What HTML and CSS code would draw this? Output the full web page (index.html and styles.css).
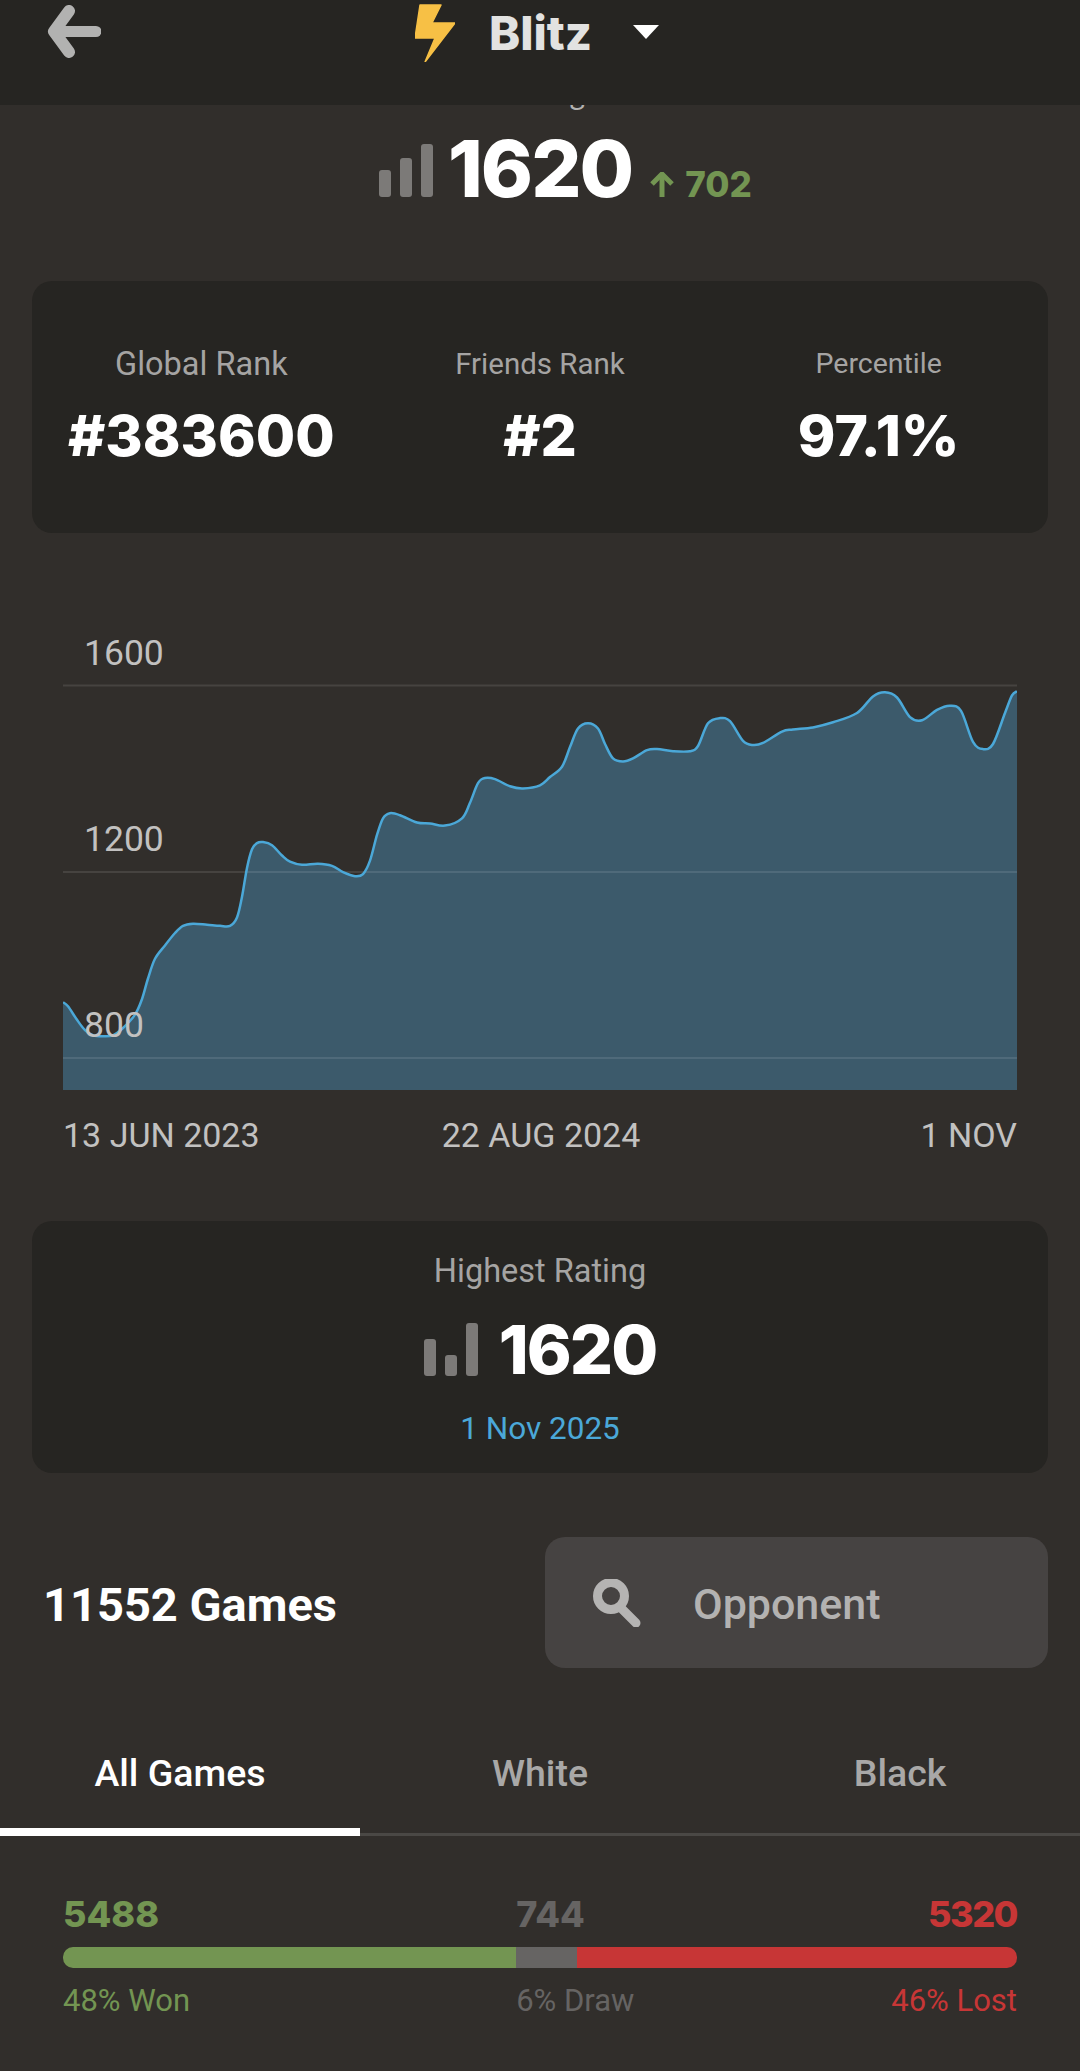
FILE: index.html
```html
<!DOCTYPE html>
<html lang="en">
<head>
  <meta charset="UTF-8">
  <meta name="viewport" content="width=device-width, initial-scale=1.0">
  <title>Blitz Stats</title>
  <link rel="stylesheet" href="styles.css">
</head>
<body>
  <header class="topbar">
    <svg class="back-icon" viewBox="0 0 54 53" aria-hidden="true">
      <polyline points="22,6 7,26.5 22,47"></polyline>
      <line x1="8" y1="26.5" x2="49" y2="26.5"></line>
    </svg>
    <svg class="bolt-icon" viewBox="0 0 40 58" aria-hidden="true">
      <polygon points="5,1 26,1 17,19 40,19 10,58 20,34 0,34"></polygon>
    </svg>
    <span class="topbar-title">Blitz</span>
    <span class="caret"></span>
  </header>

  <main>
    <div class="rating-label">Rating</div>
    <div class="rating-row">
      <div class="bars">
        <span class="bar-low"></span>
        <span class="bar-mid"></span>
        <span class="bar-high"></span>
      </div>
      <span class="rating-value">1620</span>
      <svg class="up-icon" viewBox="0 0 24 25" aria-hidden="true">
        <polyline points="2,12 12,2 22,12"></polyline>
        <line x1="12" y1="3" x2="12" y2="25"></line>
      </svg>
      <span class="rating-gain">702</span>
    </div>

    <section class="card rank-card">
      <div class="rank-col">
        <div class="rank-label rank-label-global">Global Rank</div>
        <div class="rank-value">#383600</div>
      </div>
      <div class="rank-col">
        <div class="rank-label rank-label-friends">Friends Rank</div>
        <div class="rank-value">#2</div>
      </div>
      <div class="rank-col">
        <div class="rank-label">Percentile</div>
        <div class="rank-value">97.1%</div>
      </div>
    </section>

    <svg class="chart" viewBox="0 0 954 540" aria-label="Rating history">
      <path id="chart-area" class="chart-area"></path>
      <line class="chart-grid" x1="0" y1="65.5" x2="954" y2="65.5"></line>
      <line class="chart-grid" x1="0" y1="252" x2="954" y2="252"></line>
      <line class="chart-grid" x1="0" y1="438" x2="954" y2="438"></line>
      <path id="chart-line" class="chart-line"></path>
      <text class="chart-text" x="21" y="45">1600</text>
      <text class="chart-text" x="21" y="231">1200</text>
      <text class="chart-text" x="21" y="417">800</text>
      <text class="chart-date" x="0" y="527">13 JUN 2023</text>
      <text class="chart-date" x="478" y="527" text-anchor="middle">22 AUG 2024</text>
      <text class="chart-date" x="954" y="527" text-anchor="end">1 NOV</text>
    </svg>

    <section class="card highest-card">
      <div class="rank-label highest-label">Highest Rating</div>
      <div class="highest-row">
        <div class="bars">
          <span class="bar-mid2"></span>
          <span class="bar-short"></span>
          <span class="bar-high"></span>
        </div>
        <span class="highest-value">1620</span>
      </div>
      <div class="highest-date">1 Nov 2025</div>
    </section>

    <div class="games-row">
      <div class="games-count">11552 Games</div>
      <div class="opponent-box">
        <svg class="search-icon" viewBox="0 0 48 48" aria-hidden="true">
          <circle cx="18" cy="17" r="13.5"></circle>
          <line x1="28" y1="29" x2="43" y2="44"></line>
        </svg>
        <span class="opponent-text">Opponent</span>
      </div>
    </div>

    <nav class="tabs">
      <div class="tab tab-active">All Games</div>
      <div class="tab">White</div>
      <div class="tab">Black</div>
    </nav>

    <section class="results">
      <div class="results-row results-counts">
        <span class="won">5488</span>
        <span class="draw">744</span>
        <span class="lost">5320</span>
      </div>
      <div class="result-bar">
        <span class="seg-won" style="width: 47.5%"></span>
        <span class="seg-draw" style="width: 6.4%"></span>
        <span class="seg-lost" style="width: 46.1%"></span>
      </div>
      <div class="results-row results-percents">
        <span class="won">48% Won</span>
        <span class="draw">6% Draw</span>
        <span class="lost">46% Lost</span>
      </div>
    </section>
  </main>

  <script src="chart.js"></script>
</body>
</html>
```

FILE: styles.css
```css
body {
  margin: 0;
  padding: 0;
  width: 1080px;
  height: 2071px;
  overflow: hidden;
  background-color: #312e2b;
  font-family: Roboto, sans-serif;
  color: #fff;
}

.topbar {
  position: relative;
  z-index: 2;
  display: flex;
  align-items: flex-start;
  box-sizing: border-box;
  height: 105px;
  padding: 5px 0 0 47px;
  background-color: #262522;
}

.back-icon {
  width: 54px;
  height: 53px;
  margin-right: 314px;
}

.back-icon polyline,
.back-icon line {
  fill: none;
  stroke: #b2b2b1;
  stroke-linecap: round;
  stroke-linejoin: round;
}

.back-icon polyline {
  stroke-width: 12;
}

.back-icon line {
  stroke-width: 11;
}

.bolt-icon {
  width: 40px;
  height: 58px;
  margin-top: -1px;
  fill: #f7c045;
  stroke: #f7c045;
  stroke-width: 1.5;
  stroke-linejoin: round;
}

.topbar-title {
  margin-left: 34px;
  font-family: Inter, sans-serif;
  font-size: 47px;
  font-weight: 800;
  line-height: 56px;
  color: #e2e2e1;
}

.caret {
  width: 0;
  height: 0;
  margin: 20px 0 0 41px;
  border-left: 13px solid transparent;
  border-right: 13px solid transparent;
  border-top: 14px solid #fff;
}

.rating-label {
  height: 30px;
  margin-top: -27px;
  padding-left: 6px;
  font-family: Lato, sans-serif;
  font-size: 30px;
  line-height: 30px;
  text-align: center;
  color: #b2b2b1;
}

.rating-row {
  display: flex;
  align-items: flex-end;
  height: 57px;
  margin-top: 32px;
  padding-left: 379px;
}

.bars {
  display: flex;
  align-items: flex-end;
  gap: 9px;
}

.bars span {
  display: block;
  width: 12px;
  border-radius: 3px;
  background-color: #7c7a78;
}

.bar-low { height: 27px; }
.bar-mid { height: 39px; }
.bar-high { height: 53px; }
.bar-mid2 { height: 37px; }
.bar-short { height: 21px; }

.rating-value {
  margin-left: 15px;
  font-family: Inter, sans-serif;
  font-size: 79px;
  font-weight: 800;
  letter-spacing: -2px;
  line-height: 57px;
}

.up-icon {
  width: 24px;
  height: 25px;
  margin-left: 18px;
  fill: none;
  stroke: #739552;
  stroke-width: 5;
}

.rating-gain {
  margin-left: 11px;
  font-family: Inter, sans-serif;
  font-size: 35px;
  font-weight: 800;
  line-height: 25px;
  color: #739552;
}

.card {
  box-sizing: border-box;
  width: 1016px;
  height: 252px;
  margin-left: 32px;
  border-radius: 20px;
  background-color: #262522;
}

.rank-card {
  display: grid;
  grid-template-columns: repeat(3, 1fr);
  margin-top: 84px;
  padding-top: 66px;
  text-align: center;
}

.rank-label {
  font-size: 28.5px;
  line-height: 34px;
  color: #a5a4a3;
}

.rank-label-global {
  font-size: 32.5px;
}

.rank-label-friends {
  font-size: 29.5px;
}

.rank-value {
  margin-top: 25px;
  font-family: Inter, sans-serif;
  font-size: 57px;
  font-weight: 800;
  line-height: 60px;
}

.chart {
  display: block;
  width: 954px;
  height: 540px;
  margin: 87px 0 0 63px;
}

.chart-area {
  fill: #3c5a6b;
}

.chart-grid {
  stroke: rgba(255, 255, 255, 0.1);
  stroke-width: 2;
}

.chart-line {
  fill: none;
  stroke: #4ba8d8;
  stroke-width: 2.5;
}

.chart-text {
  font-family: Roboto, sans-serif;
  font-size: 35.5px;
  fill: #c2c1c0;
}

.chart-date {
  font-family: Roboto, sans-serif;
  font-size: 34px;
  fill: #c2c1c0;
}

.highest-card {
  margin-top: 61px;
  padding-top: 33px;
  text-align: center;
}

.highest-label {
  font-size: 32.5px;
}

.highest-row {
  display: flex;
  justify-content: center;
  align-items: flex-end;
  height: 53px;
  margin-top: 35px;
}

.highest-value {
  margin-left: 21px;
  font-family: Inter, sans-serif;
  font-size: 68px;
  font-weight: 800;
  letter-spacing: -2px;
  line-height: 53px;
}

.highest-date {
  margin-top: 36px;
  font-size: 31.5px;
  line-height: 34px;
  color: #4ba8d8;
}

.games-row {
  display: flex;
  justify-content: space-between;
  align-items: center;
  margin: 64px 32px 0 43px;
}

.games-count {
  padding-top: 4px;
  font-size: 47px;
  font-weight: 700;
}

.opponent-box {
  display: flex;
  align-items: center;
  box-sizing: border-box;
  width: 503px;
  height: 131px;
  padding-left: 48px;
  border-radius: 20px;
  background-color: #464342;
}

.search-icon {
  width: 48px;
  height: 48px;
  fill: none;
  stroke: #b5b4b3;
  stroke-width: 9;
  stroke-linecap: round;
}

.opponent-text {
  margin-left: 52px;
  padding-top: 2px;
  font-size: 43px;
  font-weight: 500;
  color: #b3b2b1;
}

.tabs {
  display: flex;
  margin-top: 76px;
  border-bottom: 3px solid #4a4845;
}

.tab {
  flex: 1;
  box-sizing: border-box;
  height: 92px;
  margin-bottom: -3px;
  font-size: 37.5px;
  font-weight: 500;
  line-height: 58px;
  text-align: center;
  color: #a9a8a7;
}

.tab-active {
  border-bottom: 8px solid #fff;
  color: #fff;
}

.results {
  margin: 60px 63px 0;
}

.results-row {
  display: grid;
  grid-template-columns: 47.5% 1fr auto;
}

.results-counts {
  font-family: Inter, sans-serif;
  font-size: 36px;
  font-weight: 800;
  line-height: 36px;
}

.results-counts .lost {
  letter-spacing: -1.5px;
}

.results-percents {
  margin-top: 16px;
  font-size: 31px;
  line-height: 34px;
}

.won { color: #739552; }
.draw { color: #666463; }
.lost { color: #c73636; }

.result-bar {
  display: flex;
  height: 21px;
  margin-top: 15px;
  overflow: hidden;
  border-radius: 10px;
}

.seg-won { background-color: #739552; }
.seg-draw { background-color: #666463; }
.seg-lost { background-color: #c73636; }
```

FILE: chart.js
```js
// rating history, in chart pixels (x, y)
const points = [
  [0, 370], [5, 374], [14, 387], [22, 397], [30, 402], [40, 403], [50, 402],
  [60, 395], [72, 382], [79, 367], [85, 347], [92, 328], [102, 315], [112, 303],
  [120, 296], [130, 294], [144, 295], [157, 296], [167, 296], [174, 288],
  [179, 268], [184, 240], [189, 222], [194, 216], [200, 215], [209, 218],
  [219, 228], [227, 234], [239, 237], [255, 236], [269, 238], [280, 244],
  [292, 248], [300, 246], [307, 233], [314, 208], [320, 192], [327, 187],
  [337, 189], [354, 196], [367, 197], [382, 199], [399, 192], [407, 177],
  [415, 158], [422, 153], [432, 154], [447, 161], [460, 163], [477, 160],
  [487, 152], [499, 142], [507, 123], [515, 105], [525, 100], [535, 105],
  [542, 120], [550, 134], [560, 137], [570, 134], [584, 126], [594, 125],
  [610, 127], [627, 127], [635, 122], [645, 100], [657, 95], [667, 98],
  [680, 117], [690, 121], [700, 119], [719, 108], [730, 106], [750, 104],
  [770, 99], [794, 90], [810, 74], [822, 70], [834, 75], [847, 94], [859, 97],
  [874, 87], [887, 83], [898, 88], [910, 118], [920, 125], [930, 120],
  [942, 90], [949, 73], [954, 69]
].map(p => [p[0], +(p[1] * 1.033).toFixed(1)]);
const chartBottom = 470;

function smoothPath(pts) {
  let d = `M${pts[0][0]} ${pts[0][1]}`;
  for (let i = 0; i < pts.length - 1; i++) {
    const p0 = pts[Math.max(i - 1, 0)];
    const p1 = pts[i];
    const p2 = pts[i + 1];
    const p3 = pts[Math.min(i + 2, pts.length - 1)];
    const c1x = p1[0] + (p2[0] - p0[0]) / 6;
    const c1y = p1[1] + (p2[1] - p0[1]) / 6;
    const c2x = p2[0] - (p3[0] - p1[0]) / 6;
    const c2y = p2[1] - (p3[1] - p1[1]) / 6;
    d += ` C${c1x} ${c1y} ${c2x} ${c2y} ${p2[0]} ${p2[1]}`;
  }
  return d;
}

const line = smoothPath(points);
document.getElementById('chart-line').setAttribute('d', line);
document.getElementById('chart-area').setAttribute('d', `${line} L954 ${chartBottom} L0 ${chartBottom} Z`);
```
